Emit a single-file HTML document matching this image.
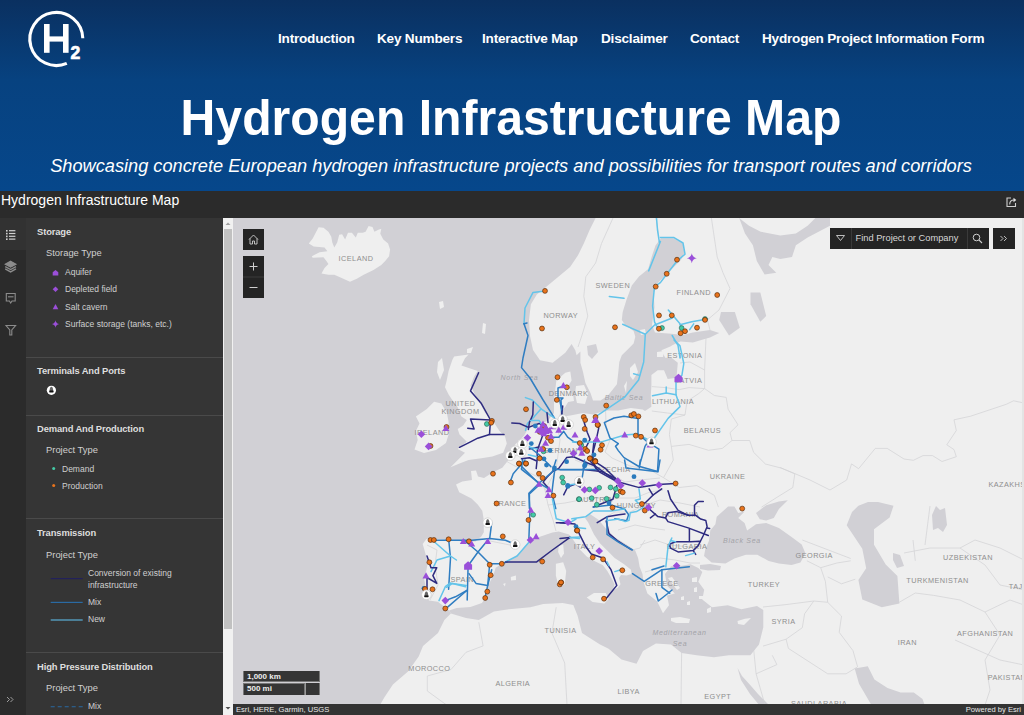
<!DOCTYPE html>
<html><head><meta charset="utf-8">
<style>
*{margin:0;padding:0;box-sizing:border-box}
html,body{width:1024px;height:715px;overflow:hidden;background:#2b2b2b;font-family:"Liberation Sans",sans-serif}
#hdr{position:absolute;left:0;top:0;width:1024px;height:191px;background:linear-gradient(180deg,#0a3060 0%,#074280 42%,#06478b 100%)}
.nav{position:absolute;top:30.5px;color:#fff;font-weight:bold;font-size:13.6px;white-space:nowrap;letter-spacing:-0.22px}
#title{position:absolute;left:0;top:89px;width:1024px;text-align:center;color:#fff;font-weight:bold;font-size:50px;white-space:nowrap;transform:translateX(-1px) scaleX(0.963)}
#sub{position:absolute;left:0;top:154.5px;width:1024px;text-align:center;color:#fff;font-style:italic;font-size:19px;white-space:nowrap;transform:translateX(-1px) scaleX(0.958)}
#bar{position:absolute;left:0;top:191px;width:1024px;height:27px;background:#2b2b2b}
#bartitle{position:absolute;left:1px;top:192px;color:#fff;font-size:14px;white-space:nowrap}
#strip{position:absolute;left:0;top:218px;width:26px;height:497px;background:#2b2b2b}
#strip .act{position:absolute;left:0;top:0;width:26px;height:32px;background:#323232}
#panel{position:absolute;left:26px;top:218px;width:197px;height:497px;background:#353535;overflow:hidden}
.lg{position:absolute;white-space:nowrap;color:#e6e6e6}
.h{font-weight:bold;font-size:9.4px;left:11px;letter-spacing:-0.12px;color:#dedede}
.pt{font-size:9.4px;left:20px;color:#d0d0d0}
.it{font-size:8.5px;color:#d0d0d0}
.div{position:absolute;left:0;width:197px;height:1px;background:#4a4a4a}
#scroll{position:absolute;left:223px;top:218px;width:10px;height:497px;background:#f1f1f1}
#thumb{position:absolute;left:1px;top:11px;width:8px;height:400px;background:#c1c1c1}
#map{position:absolute;left:233px;top:218px;width:791px;height:487px;overflow:hidden;background:#d3d3d7}
#attr{position:absolute;left:233px;top:704px;width:791px;height:11px;background:#333;color:#e8e8e8;font-size:7.6px;line-height:11px}
.btn{position:absolute;background:#242424}
</style></head><body>
<div id="hdr">
  <svg style="position:absolute;left:0;top:0" width="100" height="80">
    <path d="M 66.8 63.3 A 26.5 26.5 0 1 1 82.8 38.2" fill="none" stroke="#fff" stroke-width="3.1"/>
    <rect x="44" y="24" width="5.6" height="28.8" fill="#fff"/><rect x="63" y="24" width="5.6" height="28.8" fill="#fff"/><rect x="48" y="36.4" width="16" height="5.2" fill="#fff"/>
    <text x="70.6" y="58.8" fill="#fff" stroke="#fff" stroke-width="0.7" font-family="Liberation Sans" font-weight="bold" font-size="17.5">2</text>
  </svg>
  <div class="nav" style="left:278px">Introduction</div>
  <div class="nav" style="left:377px">Key Numbers</div>
  <div class="nav" style="left:482px">Interactive Map</div>
  <div class="nav" style="left:601px">Disclaimer</div>
  <div class="nav" style="left:690px">Contact</div>
  <div class="nav" style="left:762px">Hydrogen Project Information Form</div>
  <div id="title">Hydrogen Infrastructure Map</div>
  <div id="sub">Showcasing concrete European hydrogen infrastructure projects and possibilities for transport routes and corridors</div>
</div>
<div id="bar"></div>
<div id="bartitle">Hydrogen Infrastructure Map</div>
<svg width="16" height="16" style="position:absolute;left:1003px;top:194px"><path d="M8 4 H4 V12.5 H12.5 V9" fill="none" stroke="#cfcfcf" stroke-width="1.1"/><path d="M6.7 10.5 Q6.7 6 11 6" fill="none" stroke="#cfcfcf" stroke-width="1.1"/><path d="M10.5 3.8 L13.3 6 L10.5 8.2 Z" fill="#e0e0e0"/></svg>
<div id="strip"><div class="act"></div>
<svg width="26" height="497" style="position:absolute;left:0;top:0">
 <g fill="#d0d0d0"><rect x="6" y="12" width="1.6" height="1.6"/><rect x="6" y="14.8" width="1.6" height="1.6"/><rect x="6" y="17.6" width="1.6" height="1.6"/><rect x="6" y="20.4" width="1.6" height="1.6"/>
 <rect x="9" y="12.1" width="6.4" height="1.2"/><rect x="9" y="14.9" width="6.4" height="1.2"/><rect x="9" y="17.7" width="6.4" height="1.2"/><rect x="9" y="20.5" width="6.4" height="1.2"/></g>
 <g fill="none" stroke="#8c8c8c" stroke-width="1.1">
  <path d="M10.6 43.2 L16 46.2 L10.6 49.2 L5.2 46.2 Z" fill="#8c8c8c"/><path d="M5.2 48.6 L10.6 51.6 L16 48.6 M5.2 50.9 L10.6 53.9 L16 50.9" stroke-width="1.3"/>
  <path d="M6.3 75.5 H15.2 V83 H12 L10.7 85 L9.4 83 H6.3 Z"/><path d="M8 78.8 H13.5"/>
  <path d="M6 107.5 H15.6 L11.8 112 V117 H9.8 V112 Z"/>
  <path d="M7 479 L9.5 481.5 L7 484 M10.5 479 L13 481.5 L10.5 484" stroke="#aaa" stroke-width="0.9"/>
 </g>
</svg></div>
<div id="panel">
  <svg width="197" height="497" style="position:absolute;left:0;top:0">
 <g fill="#9b4fd9">
  <path d="M29.5 52 L32.3 54.2 V57.6 H26.7 V54.2 Z"/>
  <path d="M29.5 68.4 L32.3 71.2 L29.5 74 L26.7 71.2 Z"/>
  <path d="M29.5 86 L32.3 91.2 H26.7 Z"/>
  <path d="M29.5 102.2 Q30 105.5 33.3 106 Q30 106.5 29.5 109.8 Q29 106.5 25.7 106 Q29 105.5 29.5 102.2 Z"/>
 </g>
 <circle cx="25.4" cy="172.3" r="4.6" fill="#fff"/><path d="M23.6 173 Q23.6 169 25.4 168.8 Q27.2 169 27.2 173 Z" fill="#666"/><rect x="23.2" y="172.4" width="4.4" height="2" rx="0.6" fill="#111"/>
 <circle cx="27.7" cy="250.4" r="1.5" fill="#43c9a5"/>
 <circle cx="27.7" cy="267.5" r="1.5" fill="#e8731c"/>
 <rect x="24.7" y="360" width="32" height="1.2" fill="#22215a"/>
 <rect x="24.7" y="383.8" width="32" height="1.2" fill="#2a6aa3"/>
 <rect x="24.7" y="401.4" width="32" height="1.2" fill="#5aaed6"/>
 <path d="M24.7 488.8 H56.7" stroke="#2a6aa3" stroke-width="1.1" stroke-dasharray="4 3"/>
</svg>
<div class="lg h" style="top:8px">Storage</div>
  <div class="lg pt" style="top:29px">Storage Type</div>
  <div class="lg it" style="left:39px;top:49px">Aquifer</div>
  <div class="lg it" style="left:39px;top:66px">Depleted field</div>
  <div class="lg it" style="left:39px;top:84px">Salt cavern</div>
  <div class="lg it" style="left:39px;top:101px">Surface storage (tanks, etc.)</div>
  <div class="div" style="top:139px"></div>
  <div class="lg h" style="top:147px">Terminals And Ports</div>
  <div class="div" style="top:197px"></div>
  <div class="lg h" style="top:205px">Demand And Production</div>
  <div class="lg pt" style="top:226px">Project Type</div>
  <div class="lg it" style="left:36px;top:246px">Demand</div>
  <div class="lg it" style="left:36px;top:263px">Production</div>
  <div class="div" style="top:300px"></div>
  <div class="lg h" style="top:309px">Transmission</div>
  <div class="lg pt" style="top:331px">Project Type</div>
  <div class="lg it" style="left:62px;top:350px">Conversion of existing</div>
  <div class="lg it" style="left:62px;top:362px">infrastructure</div>
  <div class="lg it" style="left:62px;top:379px">Mix</div>
  <div class="lg it" style="left:62px;top:396px">New</div>
  <div class="div" style="top:434px"></div>
  <div class="lg h" style="top:443px">High Pressure Distribution</div>
  <div class="lg pt" style="top:464px">Project Type</div>
  <div class="lg it" style="left:62px;top:483px">Mix</div>
</div>
<div id="scroll"><div id="thumb"></div><svg width="10" height="497" style="position:absolute;left:0;top:0"><path d="M2.5 7 L5 4.5 L7.5 7 Z" fill="#a0a0a0"/><path d="M2.5 489 L5 491.5 L7.5 489 Z" fill="#505050"/></svg></div>
<div id="map"><svg width="791" height="487" viewBox="233 218 791 487" style="position:absolute;left:0;top:0;display:block">
<rect x="233" y="218" width="791" height="487" fill="#efefef"/>
<polygon points="233.0,218.0 595.6,218.0 589.7,229.8 583.8,243.5 578.0,255.2 570.1,267.0 558.4,276.8 546.6,286.6 536.8,294.4 530.9,304.2 529.0,319.9 530.0,336.0 533.0,350.0 540.0,360.2 552.7,362.7 565.3,352.7 571.6,343.9 575.3,350.2 576.6,355.2 580.4,351.4 580.4,362.7 582.9,371.6 585.4,382.9 590.5,393.0 593.0,400.5 600.5,400.5 608.0,395.5 616.9,384.2 618.5,370.4 619.3,362.0 621.8,355.3 627.7,349.4 633.6,343.5 635.3,336.8 633.6,331.0 625.2,325.0 621.8,320.0 622.7,312.0 626.4,300.0 631.8,285.5 639.0,276.4 648.2,269.1 651.8,256.4 655.5,245.5 660.9,238.2 673.6,238.2 682.7,243.6 684.5,252.7 680.9,260.0 671.8,269.1 662.7,278.2 657.3,283.6 653.6,292.7 654.5,307.3 652.0,325.0 655.0,332.5 671.5,333.8 682.8,335.0 692.9,332.5 710.0,330.0 719.2,333.0 710.0,337.6 705.5,338.8 692.9,342.6 680.3,341.4 672.8,345.0 670.3,346.4 661.4,350.2 665.2,357.7 671.5,357.7 677.8,362.7 676.5,377.8 667.7,379.0 664.0,370.3 657.7,370.3 651.4,375.0 651.4,385.4 650.8,395.4 651.4,406.8 645.0,411.0 642.7,409.5 630.8,408.0 618.2,410.6 605.6,410.6 593.0,414.4 583.0,413.0 570.3,415.6 559.0,417.0 560.2,413.1 565.3,406.8 569.0,400.5 571.6,393.0 567.8,386.7 571.6,380.4 570.3,371.6 565.3,372.8 556.4,380.4 555.2,390.5 554.0,400.5 554.0,413.1 547.4,421.0 538.6,424.0 528.3,428.3 524.0,435.7 515.2,444.5 509.5,453.0 508.5,460.0 502.3,467.7 493.0,472.3 484.0,478.0 478.0,476.5 476.0,470.5 471.0,471.0 472.0,480.0 462.3,481.5 456.0,484.6 459.2,492.3 471.5,498.5 477.7,504.6 482.3,510.8 483.8,520.0 483.8,532.3 481.0,537.0 478.0,538.4 475.6,541.4 463.0,541.4 450.4,540.1 435.3,538.9 426.4,538.9 422.7,543.9 425.2,552.7 427.7,562.8 426.4,570.3 423.9,577.9 425.2,584.2 426.4,593.0 429.0,600.6 437.8,601.8 442.8,605.6 449.1,610.6 450.9,613.6 444.4,620.0 438.0,633.0 423.0,645.9 418.7,656.6 408.0,671.6 392.9,684.5 384.3,697.4 380.0,705.0 233.0,705.0" fill="#d1d0d5"/>
<polygon points="449.1,610.6 456.7,608.1 470.5,606.9 481.9,603.1 486.9,595.5 488.2,585.5 493.2,575.4 495.7,567.8 503.3,562.8 513.4,557.7 519.6,552.7 525.0,546.2 530.8,540.3 540.6,536.4 552.4,532.5 558.8,531.4 569.1,534.4 573.5,540.2 579.4,549.0 586.7,556.4 594.0,560.8 602.9,565.2 607.3,571.1 611.7,578.4 614.6,584.3 613.0,590.0 617.5,588.0 620.5,584.3 619.0,578.0 621.0,575.0 626.4,575.5 631.5,574.0 630.8,569.6 623.4,563.7 614.6,557.9 608.7,552.0 599.9,543.2 594.0,534.4 588.2,522.6 585.2,518.2 589.6,513.8 598.5,519.7 605.8,528.5 614.6,537.3 626.4,544.6 635.2,550.5 638.1,557.9 639.6,566.7 642.5,574.0 643.5,581.8 647.4,593.6 657.2,601.4 663.0,613.2 669.0,605.3 667.0,595.5 674.8,593.6 667.0,585.8 665.0,574.0 671.0,566.2 678.8,566.2 690.5,564.2 698.3,568.1 702.3,572.0 698.3,581.8 704.2,589.7 702.3,599.5 712.0,607.3 727.7,605.3 741.4,609.3 757.0,606.0 763.3,610.0 763.3,627.3 759.0,644.4 750.4,655.2 728.9,655.2 713.9,657.3 696.7,655.2 681.6,653.0 671.0,644.4 655.9,643.4 643.0,650.9 636.5,663.8 621.5,659.5 608.6,648.7 600.0,644.4 582.0,633.0 577.6,615.8 573.3,605.0 562.6,602.9 543.3,604.0 530.4,607.2 508.9,609.3 493.9,611.5 478.8,620.0 466.0,618.0 450.9,613.6" fill="#d1d0d5"/>
<polygon points="716.7,516.7 728.1,506.5 734.4,506.5 738.2,512.9 744.6,511.6 738.2,517.9 744.6,523.0 747.1,530.6 756.0,524.3 766.2,523.0 778.9,528.1 791.6,537.0 801.7,544.6 805.5,553.5 800.4,562.4 791.6,564.9 778.9,563.6 768.7,561.1 757.3,554.7 745.9,554.7 734.4,558.6 725.5,563.6 711.6,562.4 704.0,556.0 705.2,549.7 709.0,540.8 710.3,530.6 715.4,524.3" fill="#d1d0d5"/>
<polygon points="756.0,512.9 766.2,505.2 778.9,501.4 787.8,500.2 778.9,509.0 773.8,517.9 766.2,520.5 759.8,519.2" fill="#d1d0d5"/>
<polygon points="700.0,565.0 710.0,564.0 721.0,566.0 720.0,570.0 708.0,570.5 700.0,569.0" fill="#d1d0d5"/>
<polygon points="846.7,525.3 852.0,512.0 858.4,505.8 868.0,502.0 878.0,501.9 893.5,505.8 889.6,517.5 874.0,529.2 874.0,544.8 885.7,564.4 897.4,576.0 899.4,603.4 881.8,607.3 862.3,599.5 858.4,580.0 866.2,568.3 862.3,548.8 854.5,537.0" fill="#d1d0d5"/>
<polygon points="893.0,553.0 900.0,555.0 904.0,566.0 897.0,568.0 893.0,560.0" fill="#d1d0d5"/>
<polygon points="932.0,515.0 936.0,506.0 940.0,510.0 945.0,508.0 947.0,525.0 943.0,532.0 938.0,528.0 933.0,530.0" fill="#d1d0d5"/>
<polygon points="854.7,668.4 867.8,666.3 874.4,679.4 887.5,688.0 900.6,692.5 913.8,692.5 922.5,699.0 925.0,706.0 872.0,706.0 859.0,683.8" fill="#d1d0d5"/>
<polygon points="737.5,668.0 742.0,676.0 750.4,685.3 758.0,694.0 764.0,700.0 770.0,706.0 760.0,706.0 750.0,694.0 741.0,680.0" fill="#d1d0d5"/>
<polygon points="739.2,218.0 749.0,225.8 760.7,231.7 780.3,235.6 795.9,233.6 807.6,225.8 815.4,218.0 830.0,218.0 830.0,225.8 807.6,237.5 795.9,245.3 792.0,257.0 780.3,259.0 772.4,257.0 768.5,264.9 776.3,272.7 764.6,274.6 756.8,261.0 752.9,245.3 745.0,233.6" fill="#d1d0d5"/>
<polygon points="721.0,312.0 734.9,312.0 739.8,327.7 729.0,335.5 719.2,319.9" fill="#d1d0d5"/>
<polygon points="750.5,292.4 760.3,292.4 766.2,316.0 760.3,321.8 750.5,304.2" fill="#d1d0d5"/>
<polygon points="587.0,346.0 596.0,344.0 598.0,352.0 592.0,359.0 588.0,355.0" fill="#d1d0d5"/>
<polygon points="668.0,578.0 672.0,577.0 680.0,588.0 677.0,590.0" fill="#efefef"/>
<polygon points="692.0,578.0 697.0,577.0 697.0,582.0 692.0,582.0" fill="#efefef"/>
<polygon points="694.0,588.0 697.0,587.0 697.0,592.0 694.0,592.0" fill="#efefef"/>
<polygon points="681.0,597.0 684.0,596.0 684.0,600.0 681.0,600.0" fill="#efefef"/>
<polygon points="687.0,602.0 690.0,601.0 690.0,605.0 687.0,605.0" fill="#efefef"/>
<polygon points="707.0,609.0 711.0,607.0 711.0,612.0 707.0,613.0" fill="#efefef"/>
<polygon points="699.0,596.0 703.0,596.0 703.0,599.0 699.0,599.0" fill="#efefef"/>
<polygon points="308.8,243.5 312.7,238.6 315.7,232.7 318.6,227.3 323.5,227.8 328.4,231.8 331.3,236.7 332.3,242.5 334.3,247.4 337.2,242.5 339.2,234.7 342.1,234.2 345.1,239.6 348.0,232.7 351.9,232.7 355.8,237.6 357.8,232.7 362.7,232.7 365.6,231.8 368.6,225.9 372.5,226.9 374.4,231.8 378.4,229.8 381.3,228.8 380.3,233.7 383.3,239.6 388.1,243.5 390.1,249.4 389.1,256.2 385.2,261.1 381.3,265.1 373.5,270.0 363.7,274.8 356.8,278.8 350.0,281.7 341.1,277.8 334.3,274.8 328.4,274.8 321.5,273.4 324.5,268.0 328.4,264.1 326.4,261.1 323.5,257.2 312.7,257.7 311.8,256.2 319.6,252.3 327.4,251.3 324.5,247.4 313.7,246.4" fill="#efefef"/>
<polygon points="454.1,356.4 468.6,354.5 465.0,358.2 461.4,365.5 477.7,370.9 474.1,376.4 470.5,385.5 475.9,396.4 481.4,405.5 485.0,412.7 492.3,420.0 495.9,425.5 499.5,430.9 505.0,436.4 506.8,443.6 503.2,452.7 492.3,456.4 481.4,458.2 468.6,460.0 459.5,463.6 450.5,467.3 459.5,458.2 465.0,452.7 457.7,449.1 466.8,441.8 459.5,434.5 457.7,429.1 463.2,425.5 466.8,420.0 461.4,416.4 457.7,407.3 452.3,400.0 448.6,394.5 445.0,387.3 446.8,380.0 448.6,370.9 452.3,360.0" fill="#efefef"/>
<polygon points="415.9,416.4 426.8,409.1 434.1,401.8 441.4,403.6 446.8,412.7 448.6,421.8 448.6,434.5 446.0,443.0 436.0,450.0 424.0,453.0 414.5,449.5 417.7,440.0 415.9,430.9 419.5,423.6" fill="#efefef"/>
<polygon points="438.0,362.0 442.0,358.0 444.0,370.0 440.0,380.0 437.0,372.0" fill="#efefef"/>
<polygon points="483.0,323.0 486.0,324.0 485.0,334.0 482.0,333.0" fill="#efefef"/>
<polygon points="467.0,349.0 473.0,347.0 471.0,353.0 467.0,353.0" fill="#efefef"/>
<polygon points="439.0,302.0 443.0,301.0 444.0,307.0 440.0,309.0" fill="#efefef"/>
<polygon points="558.8,546.1 563.2,544.6 564.0,553.5 561.0,557.9 558.1,552.0" fill="#efefef"/>
<polygon points="555.9,563.7 563.2,562.3 566.2,571.1 564.7,584.3 558.8,587.2 555.9,575.5" fill="#efefef"/>
<polygon points="586.7,597.5 594.0,593.1 605.8,593.1 608.7,599.0 604.3,603.4 592.6,601.9" fill="#efefef"/>
<polygon points="671.0,618.0 680.0,617.0 690.0,619.0 689.0,623.0 676.0,623.0 671.0,621.0" fill="#efefef"/>
<polygon points="737.5,621.0 745.0,618.7 751.0,618.0 744.0,625.0 738.0,624.0" fill="#efefef"/>
<polygon points="510.8,577.0 515.9,575.4 516.0,580.0 511.0,580.4" fill="#efefef"/>
<polygon points="503.0,584.0 505.5,583.0 505.0,586.5" fill="#efefef"/>
<polygon points="630.0,368.0 635.0,363.0 638.0,372.0 633.0,380.0 630.0,376.0" fill="#efefef"/>
<polygon points="624.0,386.0 627.0,381.0 626.0,393.0" fill="#efefef"/>
<polygon points="576.0,386.0 584.0,385.0 588.0,394.0 585.0,404.0 577.0,403.0 575.0,394.0" fill="#efefef"/>
<polygon points="567.0,395.0 573.0,394.0 574.0,401.0 568.0,402.0" fill="#efefef"/>
<polygon points="657.0,352.0 664.0,351.0 663.0,357.0 657.0,357.0" fill="#efefef"/>
<polygon points="640.0,330.0 645.0,329.0 646.0,334.0 641.0,335.0" fill="#efefef"/>
<g fill="none" stroke="#d3d3d5" stroke-width="0.75">
<polyline points="613.0,218.0 601.5,243.5 595.6,263.0 585.8,276.8 583.8,296.4 587.8,316.0 581.9,335.5 578.0,347.0"/>
<polyline points="656.0,218.0 659.0,238.0"/>
<polyline points="711.4,218.0 717.2,257.0 723.0,272.8 730.0,288.5 719.0,310.0 707.4,319.9 710.0,330.0"/>
<polyline points="780.0,467.5 794.3,473.4 810.0,480.0 830.0,490.0 846.7,480.0 851.5,463.9 858.6,468.7 875.3,448.4 887.2,448.4 904.0,459.0 913.4,460.3 923.0,455.6 932.5,455.6 942.0,461.5 956.3,456.7 954.0,449.6 946.8,444.8 956.3,430.5 954.0,419.8 970.6,416.2 1006.3,404.3 1013.5,400.8 1024.0,403.0"/>
<polyline points="478.8,622.2 483.1,645.9 466.0,652.3 451.0,669.5 427.3,676.0 427.3,691.0 446.6,705.0"/>
<polyline points="556.2,607.2 551.9,633.0 564.7,663.0 567.0,705.0"/>
<polyline points="681.6,653.0 681.0,705.0"/>
<polyline points="753.8,650.7 756.1,673.8 765.0,705.0"/>
<polyline points="763.0,607.0 786.0,604.6 813.8,601.0 827.7,602.3 825.4,581.5 820.7,567.7 836.9,563.0 850.7,560.8"/>
<polyline points="802.3,540.0 832.3,551.5 850.7,558.5"/>
<polyline points="806.9,560.8 820.7,567.7"/>
<polyline points="827.7,576.9 841.5,583.8 855.3,579.2"/>
<polyline points="827.7,602.3 841.5,616.1 839.2,632.3 853.0,650.7 857.6,666.9"/>
<polyline points="813.8,601.0 804.6,613.8 802.3,627.7 786.1,639.2 763.0,646.1"/>
<polyline points="786.1,639.2 788.4,648.4 827.7,673.8 846.1,673.8 857.6,666.9"/>
<polyline points="772.3,655.3 776.9,664.6 756.1,673.8"/>
<polyline points="899.2,602.3 915.3,593.0 933.8,595.4 960.0,600.0 985.0,612.0 1000.0,635.0 985.0,660.0 990.0,690.0 985.0,705.0"/>
<polyline points="913.0,540.0 915.3,560.8"/>
<polyline points="904.0,553.0 930.0,548.0 960.0,548.0 985.0,565.0 1000.0,585.0 1024.0,590.0"/>
<polyline points="930.0,506.0 925.0,545.0"/>
<polyline points="960.0,548.0 975.0,540.0 1000.0,548.0 1024.0,560.0"/>
<polyline points="985.0,612.0 1010.0,600.0 1024.0,605.0"/>
<polyline points="955.0,640.0 1000.0,660.0 1024.0,665.0"/>
<polyline points="704.6,388.6 714.4,395.5 726.2,397.4 728.1,409.2 738.0,424.8 730.0,432.7 732.0,440.5 722.3,448.4 708.6,450.3 689.0,444.4 671.3,446.4 669.4,434.6 671.3,419.0 685.0,415.0 687.0,401.3 698.8,393.5 704.6,388.6"/>
<polyline points="732.0,440.5 749.7,440.5 753.6,452.3 765.4,464.0 781.0,468.0 794.8,473.8 792.8,487.5 777.0,497.3 761.5,507.1"/>
<polyline points="671.3,446.4 673.3,460.1 663.5,477.7 679.2,487.5 696.8,485.6 714.4,495.4 718.4,507.1"/>
<polyline points="651.8,386.6 665.5,387.6 679.2,389.6 689.0,387.6 704.6,388.6"/>
<polyline points="651.8,411.0 667.4,413.0 685.0,415.0"/>
<polyline points="680.0,363.0 690.0,362.0 704.6,370.0 704.6,388.6"/>
<polyline points="706.0,338.0 704.6,370.0"/>
<polyline points="605.6,410.6 606.0,425.0 610.0,440.0 605.0,452.0 612.0,458.0 630.0,466.0 650.0,470.0 663.5,477.7"/>
<polyline points="504.0,460.0 515.0,466.0 528.0,472.0 540.0,478.0 545.0,490.0 548.0,505.0 553.0,520.0 556.0,531.0"/>
<polyline points="548.0,505.0 565.0,503.0 580.0,500.0 590.0,497.0"/>
<polyline points="545.0,490.0 556.0,470.0 558.0,455.0 560.0,440.0 556.0,420.0"/>
<polyline points="575.0,460.0 590.0,466.0 605.0,470.0 615.0,476.0 625.0,482.0 640.0,480.0 660.0,478.0"/>
<polyline points="590.0,497.0 605.0,500.0 620.0,498.0 635.0,498.0 650.0,492.0 663.0,490.0"/>
<polyline points="478.0,538.4 490.0,541.0 505.0,544.0 515.0,546.0"/>
<polyline points="427.0,545.0 437.0,550.0 435.0,565.0 438.0,585.0 430.0,600.0"/>
<polyline points="600.0,520.0 615.0,512.0 630.0,512.0 645.0,505.0 660.0,500.0 680.0,503.0 700.0,507.0"/>
<polyline points="618.0,530.0 635.0,525.0 650.0,528.0 665.0,530.0"/>
<polyline points="640.0,545.0 655.0,540.0 670.0,545.0 690.0,547.0 702.0,546.0"/>
<polyline points="650.0,560.0 660.0,558.0 675.0,560.0 690.0,563.0 700.0,563.0"/>
<polyline points="632.0,550.0 640.0,548.0 645.0,540.0"/>
<polyline points="645.0,572.0 660.0,568.0"/>
</g>
<g font-family="Liberation Sans" font-size="7.3" fill="#8e8e8e" text-anchor="middle" letter-spacing="0.45">
<text x="356" y="260.9">ICELAND</text>
<text x="560.7" y="317.7">NORWAY</text>
<text x="612.8" y="287.9">SWEDEN</text>
<text x="693.7" y="295.09999999999997">FINLAND</text>
<text x="684.8" y="358.0">ESTONIA</text>
<text x="688.7" y="382.5">LATVIA</text>
<text x="673" y="403.7">LITHUANIA</text>
<text x="702.4" y="432.7">BELARUS</text>
<text x="727.5" y="479.2">UKRAINE</text>
<text x="568.5" y="395.7">DENMARK</text>
<text x="460.5" y="406.0">UNITED</text>
<text x="460.5" y="413.7">KINGDOM</text>
<text x="432" y="435.4">IRELAND</text>
<text x="510" y="506.2">FRANCE</text>
<text x="462.3" y="581.9000000000001">SPAIN</text>
<text x="584.5" y="548.9000000000001">ITALY</text>
<text x="563" y="453.0">GERMANY</text>
<text x="613" y="471.7">CZECHIA</text>
<text x="595.3" y="501.5">AUSTRIA</text>
<text x="636.4" y="508.09999999999997">HUNGARY</text>
<text x="680.5" y="516.6">ROMANIA</text>
<text x="687" y="548.9000000000001">BULGARIA</text>
<text x="661.9" y="585.7">GREECE</text>
<text x="764" y="586.7">TURKEY</text>
<text x="814.2" y="557.5">GEORGIA</text>
<text x="968" y="560.1">UZBEKISTAN</text>
<text x="937.5" y="582.8000000000001">TURKMENISTAN</text>
<text x="1017" y="589.4000000000001">TAJI</text>
<text x="1007" y="487.2">KAZAKHS</text>
<text x="783.5" y="624.4000000000001">SYRIA</text>
<text x="907.3" y="645.3000000000001">IRAN</text>
<text x="985.2" y="635.7">AFGHANISTAN</text>
<text x="1007" y="680.1">PAKISTAN</text>
<text x="819" y="706.1">SAUDI ARABIA</text>
<text x="628.6" y="694.0">LIBYA</text>
<text x="717.7" y="699.3000000000001">EGYPT</text>
<text x="560.5" y="632.9000000000001">TUNISIA</text>
<text x="512.8" y="685.5">ALGERIA</text>
<text x="429.4" y="670.5">MOROCCO</text>
</g>
<g font-family="Liberation Sans" font-size="7" font-style="italic" fill="#a3a3a8" text-anchor="middle" letter-spacing="0.7">
<text x="519.5" y="380.2">North Sea</text>
<text x="624" y="400.4">Baltic Sea</text>
<text x="742" y="543.1">Black Sea</text>
<text x="679.5" y="635.0">Mediterranean</text>
<text x="680" y="646.4">Sea</text>
</g>
<g fill="none" stroke-width="1.5" stroke-linejoin="round" stroke-linecap="round">
<polyline stroke="#63c4ea" points="545.0,290.9 533.0,292.4 525.0,308.0 524.0,323.8"/>
<polyline stroke="#2f7dc1" points="524.0,323.8 528.0,335.5 523.0,358.0 521.5,367.6 530.0,378.0 543.1,400.0 554.8,418.6"/>
<polyline stroke="#2f7dc1" points="524.0,323.8 527.0,323.0"/>
<polyline stroke="#63c4ea" points="525.4,397.6 532.3,400.0 541.1,408.8 553.9,417.6"/>
<polyline stroke="#63c4ea" points="541.1,408.8 534.3,416.6 527.4,423.5 525.5,430.4"/>
<polyline stroke="#2e2b80" points="533.3,402.0 532.8,414.7 529.4,422.5 528.4,429.4"/>
<polyline stroke="#2e2b80" points="547.0,412.7 548.0,422.5"/>
<polyline stroke="#2e2b80" points="511.8,423.0 519.6,423.5 528.4,427.4 539.2,423.5 546.0,426.0"/>
<polyline stroke="#63c4ea" points="530.4,420.6 539.2,420.6 541.0,423.5"/>
<polyline stroke="#2e2b80" points="478.6,372.7 470.5,390.9 481.4,403.6 490.5,420.0 489.5,434.5 504.0,434.5"/>
<polyline stroke="#2e2b80" points="489.5,434.5 477.7,438.2 470.5,441.8 459.5,447.3"/>
<polyline stroke="#2e2b80" points="490.5,420.0 470.5,419.1 474.1,429.1 467.7,428.2"/>
<polyline stroke="#2f7dc1" points="561.0,387.0 558.0,388.0 558.0,398.0 563.0,398.0 561.0,400.0 561.5,412.0 562.7,418.0"/>
<polyline stroke="#63c4ea" points="609.3,296.4 624.0,298.3"/>
<polyline stroke="#63c4ea" points="622.7,324.2 631.9,328.4 645.3,334.3 643.7,362.0 638.6,380.0 625.0,396.8 597.6,415.4"/>
<polyline stroke="#63c4ea" points="645.3,334.3 654.6,325.0 672.2,318.0"/>
<polyline stroke="#63c4ea" points="633.6,373.7 639.5,375.4"/>
<polyline stroke="#63c4ea" points="656.5,218.0 657.5,229.8 659.4,242.5"/>
<polyline stroke="#63c4ea" points="660.4,237.6 674.0,237.6 683.0,243.0 685.0,254.2 677.0,261.0 666.3,274.8 660.4,282.6 654.5,286.6 652.6,306.0 654.5,321.8 658.5,329.7"/>
<polyline stroke="#63c4ea" points="660.4,241.5 648.7,270.9"/>
<polyline stroke="#63c4ea" points="668.3,310.0 680.0,323.8 682.0,330.0"/>
<polyline stroke="#63c4ea" points="672.2,335.5 678.0,345.3 680.0,358.0"/>
<polyline stroke="#63c4ea" points="680.0,324.8 691.8,321.8 707.4,318.9"/>
<polyline stroke="#63c4ea" points="693.7,323.8 689.7,329.7"/>
<polyline stroke="#63c4ea" points="674.0,340.0 680.0,345.9 683.8,363.5 681.9,375.3 676.0,381.0 676.0,394.8 680.0,406.6 668.1,418.4 654.4,438.0"/>
<polyline stroke="#63c4ea" points="652.5,395.8 666.2,392.9 676.0,394.8"/>
<polyline stroke="#63c4ea" points="666.2,387.0 666.2,392.9"/>
<polyline stroke="#63c4ea" points="601.5,441.9 625.0,435.0 636.8,434.0 648.6,440.0"/>
<polyline stroke="#2f7dc1" points="604.3,422.6 614.0,418.0 624.0,416.3 638.0,418.4 638.0,433.8 647.7,442.2 658.9,449.2 657.5,471.5 638.0,466.0 624.0,457.6 618.3,450.6 615.5,446.4 618.3,443.6 610.0,438.0 604.3,422.6"/>
<polyline stroke="#2f7dc1" points="639.3,466.0 645.0,446.4 647.7,442.2"/>
<polyline stroke="#2e2b80" points="543.1,434.3 539.2,445.0 537.2,451.0 537.2,458.8 536.2,468.6"/>
<polyline stroke="#2e2b80" points="529.4,449.0 539.0,447.0"/>
<polyline stroke="#2e2b80" points="562.7,405.9 561.7,415.0"/>
<polyline stroke="#2e2b80" points="584.2,422.5 587.2,432.3 590.1,439.2 586.2,447.0 584.0,451.0"/>
<polyline stroke="#2e2b80" points="594.0,441.1 592.0,458.8 596.0,468.6"/>
<polyline stroke="#2e2b80" points="549.0,489.0 543.1,482.1 547.0,477.2 552.9,471.3 558.8,468.4 566.6,457.6 573.5,456.7 586.2,462.5 583.3,469.4 601.5,471.5 615.5,478.5"/>
<polyline stroke="#2f7dc1" points="554.8,469.4 552.9,484.1 551.9,492.9 555.8,508.6"/>
<polyline stroke="#2e2b80" points="563.7,494.8 567.6,487.0 575.4,484.1 580.3,487.0"/>
<polyline stroke="#63c4ea" points="568.6,485.0 575.4,484.1"/>
<polyline stroke="#2f7dc1" points="584.2,464.5 582.3,477.2"/>
<polyline stroke="#2f7dc1" points="522.5,459.6 521.5,469.4 539.2,483.1 549.0,489.0"/>
<polyline stroke="#2f7dc1" points="529.4,508.6 529.4,493.9 539.2,485.0"/>
<polyline stroke="#2f7dc1" points="554.8,469.4 600.0,469.4"/>
<polyline stroke="#2e2b80" points="521.5,458.8 529.4,457.8 536.2,460.7"/>
<polyline stroke="#2e2b80" points="586.0,420.0 584.0,417.0"/>
<polyline stroke="#2e2b80" points="596.0,418.4 598.7,428.2 596.0,440.8 593.1,452.0 593.1,460.4 605.7,468.7 615.5,478.5 621.1,485.5"/>
<polyline stroke="#2f7dc1" points="551.0,437.2 558.8,437.2 563.7,431.3 567.6,437.2 574.4,442.1 580.0,443.0"/>
<polyline stroke="#2f7dc1" points="529.4,447.0 539.2,454.8 543.1,458.8 550.9,466.6"/>
<polyline stroke="#2f7dc1" points="559.7,400.0 561.7,409.8"/>
<polyline stroke="#63c4ea" points="572.5,442.1 585.2,442.1 601.5,441.9"/>
<polyline stroke="#63c4ea" points="529.4,447.0 537.0,449.0"/>
<polyline stroke="#63c4ea" points="528.4,454.8 537.0,456.8"/>
<polyline stroke="#2f7dc1" points="434.8,540.3 472.0,540.3 489.7,538.4 505.4,540.3 515.2,544.2"/>
<polyline stroke="#2f7dc1" points="489.7,538.4 491.7,522.7"/>
<polyline stroke="#2f7dc1" points="464.2,540.3 478.0,552.0 489.7,563.8 501.4,563.8 507.3,561.9"/>
<polyline stroke="#2f7dc1" points="487.7,540.3 478.0,552.0 468.1,565.8 467.2,600.0"/>
<polyline stroke="#2f7dc1" points="448.6,538.4 450.5,558.0 448.6,589.3"/>
<polyline stroke="#2f7dc1" points="528.9,538.4 529.9,511.0 528.9,493.3 538.7,483.5 552.4,471.8 556.0,460.0"/>
<polyline stroke="#2f7dc1" points="525.0,460.0 513.2,473.7 510.3,481.5"/>
<polyline stroke="#2f7dc1" points="521.0,465.9 538.7,483.5"/>
<polyline stroke="#2f7dc1" points="469.0,573.6 476.0,583.4 487.7,585.4 491.7,569.7"/>
<polyline stroke="#2f7dc1" points="489.7,563.8 487.7,585.4 485.0,598.0"/>
<polyline stroke="#63c4ea" points="434.8,542.3 450.5,556.0 456.4,560.0"/>
<polyline stroke="#63c4ea" points="431.0,571.7 437.0,560.0 450.5,556.0"/>
<polyline stroke="#63c4ea" points="446.6,587.3 452.5,583.4 466.2,585.4"/>
<polyline stroke="#63c4ea" points="505.4,561.9 517.1,556.0 528.9,542.3"/>
<polyline stroke="#63c4ea" points="552.4,499.2 556.3,518.8 570.0,522.7 576.0,519.0"/>
<polyline stroke="#63c4ea" points="570.0,537.4 580.0,537.0"/>
<polyline stroke="#2e2b80" points="505.4,561.9 536.7,561.9 552.4,550.0 570.0,537.4"/>
<polyline stroke="#2e2b80" points="427.0,556.0 431.0,567.7 436.8,567.7 432.9,575.6 436.8,583.4 427.0,577.5 427.0,589.3"/>
<polyline stroke="#2e2b80" points="556.3,522.7 568.0,522.7"/>
<polyline stroke="#2f7dc1" points="466.8,590.5 455.4,596.8 445.3,600.6"/>
<polyline stroke="#2f7dc1" points="466.8,590.5 447.9,606.9"/>
<polyline stroke="#63c4ea" points="439.0,600.6 445.3,586.7 450.4,582.9 465.5,586.7"/>
<polyline stroke="#2e2b80" points="586.2,462.5 595.3,466.0 616.8,481.5 638.4,487.4 658.0,484.5 675.6,483.5"/>
<polyline stroke="#2e2b80" points="589.4,460.0 599.2,471.8 616.8,481.5"/>
<polyline stroke="#2e2b80" points="616.8,485.5 612.9,499.2 593.3,507.0"/>
<polyline stroke="#2e2b80" points="560.0,522.7 575.0,524.0 579.6,534.4 585.5,546.2 591.3,554.0 603.0,558.0 611.0,569.7 616.8,585.4 605.0,600.0"/>
<polyline stroke="#2e2b80" points="560.0,538.4 569.8,537.4"/>
<polyline stroke="#2e2b80" points="597.2,522.7 607.0,516.8 618.8,514.8 625.0,514.0"/>
<polyline stroke="#2e2b80" points="606.2,521.0 609.0,533.6 617.3,540.6 631.3,549.7"/>
<polyline stroke="#2f7dc1" points="560.0,469.8 583.5,469.8 584.5,460.0"/>
<polyline stroke="#2f7dc1" points="624.6,460.0 626.0,468.0 658.0,471.8 660.0,460.0"/>
<polyline stroke="#2f7dc1" points="640.3,460.0 639.3,468.0"/>
<polyline stroke="#2f7dc1" points="593.3,507.0 611.0,505.0 624.6,509.0 628.6,514.8 626.6,520.7 614.8,518.8"/>
<polyline stroke="#2f7dc1" points="607.0,516.8 607.0,534.4 618.8,542.3 632.5,550.0"/>
<polyline stroke="#2f7dc1" points="632.5,573.6 644.2,581.4 661.9,569.7 689.3,566.8"/>
<polyline stroke="#2f7dc1" points="661.9,569.7 661.9,587.3 669.7,593.2"/>
<polyline stroke="#2f7dc1" points="652.0,569.7 664.0,566.0"/>
<polyline stroke="#2f7dc1" points="656.0,593.5 658.3,601.0 667.8,593.5 672.0,590.0"/>
<polyline stroke="#63c4ea" points="571.8,518.8 585.5,516.8 593.3,511.0 611.0,511.0 624.6,509.0"/>
<polyline stroke="#63c4ea" points="575.7,527.6 585.5,528.6"/>
<polyline stroke="#63c4ea" points="569.8,537.4 579.6,538.4"/>
<polyline stroke="#63c4ea" points="614.8,571.6 620.8,569.7"/>
<polyline stroke="#63c4ea" points="607.0,561.9 609.0,565.8"/>
<polyline stroke="#2e2b80" points="649.1,488.9 652.9,495.2 661.7,488.9"/>
<polyline stroke="#2e2b80" points="652.9,495.2 645.3,502.7 641.6,504.0"/>
<polyline stroke="#2e2b80" points="668.0,490.8 670.5,499.0 678.1,510.3 688.2,515.3 695.7,515.3 700.8,519.1 705.8,520.4 707.1,526.7 703.3,535.5 698.2,545.6 693.2,550.6 678.1,551.9 670.5,548.1 669.3,544.3 675.6,541.8 690.7,541.8 699.5,541.2"/>
<polyline stroke="#2e2b80" points="647.9,507.8 657.9,516.6 665.5,517.9 668.0,512.8 676.8,511.6 688.2,515.3"/>
<polyline stroke="#2e2b80" points="665.5,517.9 668.0,521.6 688.2,527.9 708.3,535.5"/>
<polyline stroke="#2e2b80" points="694.5,515.3 694.5,505.3 698.2,501.5 703.3,501.5"/>
<polyline stroke="#2e2b80" points="689.4,529.2 689.4,540.5"/>
<polyline stroke="#2e2b80" points="650.4,517.9 655.4,514.0"/>
<polyline stroke="#2e2b80" points="707.0,528.0 709.6,528.6"/>
<polyline stroke="#2e2b80" points="693.2,550.6 695.7,554.4"/>
<polyline stroke="#63c4ea" points="639.0,488.9 640.3,499.0 635.3,500.2 637.8,502.7 642.8,504.0 642.8,507.8 636.5,511.6 630.2,512.8 629.0,520.4 625.2,521.6 618.9,519.1 607.6,520.4"/>
<polyline stroke="#63c4ea" points="671.8,538.0 668.0,546.8 666.8,558.2 665.8,566.8"/>
<polyline stroke="#63c4ea" points="670.5,540.5 675.6,541.8"/>
<polyline stroke="#63c4ea" points="685.6,555.6 694.5,553.1"/>
</g>
<g fill="#2a7bbd">
<circle cx="535.3" cy="426" r="2.4"/>
<circle cx="531.3" cy="443.6" r="2.4"/>
<circle cx="550" cy="450.4" r="2.4"/>
<circle cx="544" cy="458.8" r="2.4"/>
<circle cx="546.5" cy="465.1" r="2.4"/>
<circle cx="554.4" cy="468" r="2.4"/>
<circle cx="566.6" cy="461.7" r="2.4"/>
<circle cx="584.7" cy="440.2" r="2.4"/>
<circle cx="594" cy="454.8" r="2.4"/>
<circle cx="585.2" cy="464.6" r="2.4"/>
<circle cx="567.7" cy="485.5" r="2.4"/>
<circle cx="576" cy="526.6" r="2.4"/>
<circle cx="424" cy="588.3" r="2.4"/>
<circle cx="634" cy="476.7" r="2.4"/>
<circle cx="567.8" cy="486.4" r="2.4"/>
<circle cx="609" cy="503" r="2.4"/>
<circle cx="584.5" cy="465.9" r="2.4"/>
</g>
<g fill="#43c9a5" stroke="#245e50" stroke-width="0.6">
<circle cx="486.8" cy="424" r="2.4"/>
<circle cx="662" cy="328" r="2.4"/>
<circle cx="681.6" cy="328" r="2.4"/>
<circle cx="705" cy="319" r="2.4"/>
<circle cx="533.2" cy="514.8" r="2.4"/>
<circle cx="562.2" cy="477.6" r="2.4"/>
<circle cx="563.2" cy="482.5" r="2.4"/>
<circle cx="578.8" cy="499.2" r="2.4"/>
<circle cx="543.6" cy="451.4" r="2.4"/>
<circle cx="581.3" cy="445" r="2.4"/>
<circle cx="589.4" cy="489.4" r="2.4"/>
<circle cx="599.2" cy="487.8" r="2.4"/>
<circle cx="610.5" cy="487.4" r="2.4"/>
<circle cx="615.8" cy="489" r="2.4"/>
<circle cx="616.8" cy="495.8" r="2.4"/>
<circle cx="579.2" cy="499.2" r="2.4"/>
<circle cx="591.7" cy="498.2" r="2.4"/>
<circle cx="606.6" cy="498.8" r="2.4"/>
<circle cx="596.8" cy="504.7" r="2.4"/>
</g>
<g fill="#e8731c" stroke="#5a2e0c" stroke-width="0.7">
<circle cx="545" cy="290.9" r="2.45"/>
<circle cx="542" cy="328.5" r="2.45"/>
<circle cx="615" cy="327.3" r="2.45"/>
<circle cx="677" cy="259.7" r="2.45"/>
<circle cx="666.7" cy="273.8" r="2.45"/>
<circle cx="655.7" cy="286.6" r="2.45"/>
<circle cx="717.2" cy="295" r="2.45"/>
<circle cx="659" cy="315.4" r="2.45"/>
<circle cx="671.8" cy="315.4" r="2.45"/>
<circle cx="705" cy="319.9" r="2.45"/>
<circle cx="697" cy="327.7" r="2.45"/>
<circle cx="658.9" cy="328.7" r="2.45"/>
<circle cx="685" cy="331.2" r="2.45"/>
<circle cx="680.6" cy="333.2" r="2.45"/>
<circle cx="557.5" cy="377.2" r="2.45"/>
<circle cx="566.8" cy="387.3" r="2.45"/>
<circle cx="556.8" cy="399.9" r="2.45"/>
<circle cx="606.2" cy="405.6" r="2.45"/>
<circle cx="491.9" cy="420.9" r="2.45"/>
<circle cx="491.2" cy="422.7" r="2.45"/>
<circle cx="446.5" cy="427" r="2.45"/>
<circle cx="430.5" cy="446" r="2.45"/>
<circle cx="526" cy="409.3" r="2.45"/>
<circle cx="583.7" cy="417" r="2.45"/>
<circle cx="585.2" cy="420" r="2.45"/>
<circle cx="595.5" cy="417" r="2.45"/>
<circle cx="598" cy="425" r="2.45"/>
<circle cx="584.7" cy="428.9" r="2.45"/>
<circle cx="544" cy="426" r="2.45"/>
<circle cx="541.6" cy="429.9" r="2.45"/>
<circle cx="539.7" cy="431.8" r="2.45"/>
<circle cx="548" cy="437.7" r="2.45"/>
<circle cx="551" cy="441.1" r="2.45"/>
<circle cx="543.1" cy="449" r="2.45"/>
<circle cx="539.7" cy="458.3" r="2.45"/>
<circle cx="519.1" cy="463.7" r="2.45"/>
<circle cx="526" cy="463.7" r="2.45"/>
<circle cx="579.8" cy="443.1" r="2.45"/>
<circle cx="585.2" cy="449" r="2.45"/>
<circle cx="587.2" cy="451" r="2.45"/>
<circle cx="590.1" cy="458.3" r="2.45"/>
<circle cx="595" cy="461.2" r="2.45"/>
<circle cx="631.3" cy="415.4" r="2.45"/>
<circle cx="633.9" cy="414" r="2.45"/>
<circle cx="638.4" cy="416.4" r="2.45"/>
<circle cx="655" cy="430.5" r="2.45"/>
<circle cx="635.8" cy="435.6" r="2.45"/>
<circle cx="641" cy="436.8" r="2.45"/>
<circle cx="597.6" cy="424.8" r="2.45"/>
<circle cx="602" cy="445.2" r="2.45"/>
<circle cx="600.6" cy="449.7" r="2.45"/>
<circle cx="589.8" cy="458.5" r="2.45"/>
<circle cx="595.3" cy="461" r="2.45"/>
<circle cx="519" cy="463.5" r="2.45"/>
<circle cx="526" cy="463.5" r="2.45"/>
<circle cx="493" cy="473.7" r="2.45"/>
<circle cx="510.9" cy="482.5" r="2.45"/>
<circle cx="496.6" cy="503.5" r="2.45"/>
<circle cx="528.5" cy="520" r="2.45"/>
<circle cx="502.8" cy="536.4" r="2.45"/>
<circle cx="430.5" cy="540" r="2.45"/>
<circle cx="433.9" cy="540" r="2.45"/>
<circle cx="448.6" cy="539.3" r="2.45"/>
<circle cx="469" cy="541.3" r="2.45"/>
<circle cx="429.4" cy="562.3" r="2.45"/>
<circle cx="432.5" cy="589.3" r="2.45"/>
<circle cx="425" cy="589" r="2.45"/>
<circle cx="489.7" cy="564.8" r="2.45"/>
<circle cx="501.8" cy="563.8" r="2.45"/>
<circle cx="490.7" cy="575.2" r="2.45"/>
<circle cx="487.3" cy="591.6" r="2.45"/>
<circle cx="485.2" cy="598" r="2.45"/>
<circle cx="542.2" cy="561.5" r="2.45"/>
<circle cx="553.4" cy="495.7" r="2.45"/>
<circle cx="539" cy="473.7" r="2.45"/>
<circle cx="542.6" cy="478" r="2.45"/>
<circle cx="576.9" cy="530.5" r="2.45"/>
<circle cx="559.8" cy="584.4" r="2.45"/>
<circle cx="561.2" cy="582.4" r="2.45"/>
<circle cx="445.3" cy="608.5" r="2.45"/>
<circle cx="595.3" cy="461.6" r="2.45"/>
<circle cx="675.6" cy="483.5" r="2.45"/>
<circle cx="742.2" cy="508.6" r="2.45"/>
<circle cx="612.5" cy="507.6" r="2.45"/>
<circle cx="641.9" cy="504" r="2.45"/>
<circle cx="644.8" cy="510.5" r="2.45"/>
<circle cx="577.2" cy="530.5" r="2.45"/>
<circle cx="592.7" cy="557.4" r="2.45"/>
<circle cx="603.1" cy="559.3" r="2.45"/>
<circle cx="622.3" cy="570.3" r="2.45"/>
<circle cx="561" cy="582.4" r="2.45"/>
<circle cx="604" cy="598.7" r="2.45"/>
<circle cx="620.7" cy="491.3" r="2.45"/>
<circle cx="622.7" cy="492.3" r="2.45"/>
</g>
<g fill="#9a4fd9">
<path d="M541 424.6L544.5 430.8L537.5 430.8Z"/>
<path d="M544 430.1L547.5 436.3L540.5 436.3Z"/>
<path d="M549.5 427.1L553.0 433.3L546.0 433.3Z"/>
<path d="M543 420.6L546.5 426.8L539.5 426.8Z"/>
<path d="M538 426.6L541.5 432.8L534.5 432.8Z"/>
<path d="M551 432.6L554.5 438.8L547.5 438.8Z"/>
<path d="M445.9 424.8L449.4 431.0L442.4 431.0Z"/>
<path d="M624.7 431.20000000000005L628.2 437.40000000000003L621.2 437.40000000000003Z"/>
<path d="M596.7 435.6L600.2 441.8L593.2 441.8Z"/>
<path d="M594.7 416.90000000000003L598.2 423.1L591.2 423.1Z"/>
<path d="M650 441.40000000000003L653.5 447.6L646.5 447.6Z"/>
<path d="M546 424.0L549.5 430.2L542.5 430.2Z"/>
<path d="M546 427.90000000000003L549.5 434.1L542.5 434.1Z"/>
<path d="M552.9 423.0L556.4 429.2L549.4 429.2Z"/>
<path d="M558.8 426.5L562.3 432.7L555.3 432.7Z"/>
<path d="M563.7 423.6L567.2 429.8L560.2 429.8Z"/>
<path d="M575 431.40000000000003L578.5 437.6L571.5 437.6Z"/>
<path d="M545.5 439.6L549.0 445.8L542.0 445.8Z"/>
<path d="M541.1 445.6L544.6 451.8L537.6 451.8Z"/>
<path d="M580.3 444.1L583.8 450.3L576.8 450.3Z"/>
<path d="M581.8 449.5L585.3 455.7L578.3 455.7Z"/>
<path d="M596 416.20000000000005L599.5 422.40000000000003L592.5 422.40000000000003Z"/>
<path d="M596.5 435.3L600.0 441.5L593.0 441.5Z"/>
<path d="M463.3 537.9L466.8 544.0999999999999L459.8 544.0999999999999Z"/>
<path d="M471.7 540.4L475.2 546.5999999999999L468.2 546.5999999999999Z"/>
<path d="M487.7 537.9L491.2 544.0999999999999L484.2 544.0999999999999Z"/>
<path d="M530.8 506.6L534.3 512.8L527.3 512.8Z"/>
<path d="M536.1 533.0L539.6 539.1999999999999L532.6 539.1999999999999Z"/>
<path d="M539 480.6L542.5 486.8L535.5 486.8Z"/>
<path d="M548.9 486.0L552.4 492.2L545.4 492.2Z"/>
<path d="M548 491.90000000000003L551.5 498.1L544.5 498.1Z"/>
<path d="M426 572.2L429.5 578.4L422.5 578.4Z"/>
<path d="M563.4 382.0L566.9 388.2L559.9 388.2Z"/>
<path d="M546 425.7L549.8 429.5L546 433.3L542.2 429.5Z"/>
<path d="M541.5 428.2L545.3 432L541.5 435.8L537.7 432Z"/>
<path d="M421.4 430.4L425.2 434.2L421.4 438.0L417.59999999999997 434.2Z"/>
<path d="M428.6 442.59999999999997L432.40000000000003 446.4L428.6 450.2L424.8 446.4Z"/>
<path d="M527.4 433.9L531.1999999999999 437.7L527.4 441.5L523.6 437.7Z"/>
<path d="M573.5 449.59999999999997L577.3 453.4L573.5 457.2L569.7 453.4Z"/>
<path d="M530.4 536.2L534.1999999999999 540L530.4 543.8L526.6 540Z"/>
<path d="M568 518.5L571.8 522.3L568 526.0999999999999L564.2 522.3Z"/>
<path d="M617.8 477.2L621.5999999999999 481L617.8 484.8L614.0 481Z"/>
<path d="M620.7 481.7L624.5 485.5L620.7 489.3L616.9000000000001 485.5Z"/>
<path d="M642.3 479.2L646.0999999999999 483L642.3 486.8L638.5 483Z"/>
<path d="M658.9 481.2L662.6999999999999 485L658.9 488.8L655.1 485Z"/>
<path d="M584.5 486.0L588.3 489.8L584.5 493.6L580.7 489.8Z"/>
<path d="M595.3 486.59999999999997L599.0999999999999 490.4L595.3 494.2L591.5 490.4Z"/>
<path d="M648.5 503.59999999999997L652.3 507.4L648.5 511.2L644.7 507.4Z"/>
<path d="M599.2 547.2L603.0 551L599.2 554.8L595.4000000000001 551Z"/>
<path d="M676.6 562.0L680.4 565.8L676.6 569.5999999999999L672.8000000000001 565.8Z"/>
<path d="M445.3 596.8000000000001L449.1 600.6L445.3 604.4L441.5 600.6Z"/>
<path d="M678.5 373.7L682.5 377.2L682.5 382.2L674.5 382.2L674.5 377.2Z"/>
<path d="M468.1 561.3L472.1 564.8L472.1 569.8L464.1 569.8L464.1 564.8Z"/>
<path d="M691.8 253.2Q692.5 257.5 696.8 258.2Q692.5 258.9 691.8 263.2Q691.0999999999999 258.9 686.8 258.2Q691.0999999999999 257.5 691.8 253.2Z"/>
</g>
<circle cx="562.7" cy="419.6" r="4.8" fill="#fff" stroke="#cfcfcf" stroke-width="0.8"/>
<path d="M560.9000000000001 420.40000000000003Q560.9000000000001 416.40000000000003 562.7 416.20000000000005Q564.5 416.40000000000003 564.5 420.40000000000003Z" fill="#666"/><rect x="560.5" y="420.0" width="4.4" height="2" rx="0.6" fill="#111"/>
<circle cx="554.8" cy="423.5" r="4.8" fill="#fff" stroke="#cfcfcf" stroke-width="0.8"/>
<path d="M553.0 424.3Q553.0 420.3 554.8 420.1Q556.5999999999999 420.3 556.5999999999999 424.3Z" fill="#666"/><rect x="552.5999999999999" y="423.9" width="4.4" height="2" rx="0.6" fill="#111"/>
<circle cx="568.6" cy="424.5" r="4.8" fill="#fff" stroke="#cfcfcf" stroke-width="0.8"/>
<path d="M566.8000000000001 425.3Q566.8000000000001 421.3 568.6 421.1Q570.4 421.3 570.4 425.3Z" fill="#666"/><rect x="566.4" y="424.9" width="4.4" height="2" rx="0.6" fill="#111"/>
<circle cx="522.4" cy="443.7" r="4.8" fill="#fff" stroke="#cfcfcf" stroke-width="0.8"/>
<path d="M520.6 444.5Q520.6 440.5 522.4 440.3Q524.1999999999999 440.5 524.1999999999999 444.5Z" fill="#666"/><rect x="520.1999999999999" y="444.09999999999997" width="4.4" height="2" rx="0.6" fill="#111"/>
<circle cx="515.1" cy="450.7" r="4.8" fill="#fff" stroke="#cfcfcf" stroke-width="0.8"/>
<path d="M513.3000000000001 451.5Q513.3000000000001 447.5 515.1 447.3Q516.9 447.5 516.9 451.5Z" fill="#666"/><rect x="512.9" y="451.09999999999997" width="4.4" height="2" rx="0.6" fill="#111"/>
<circle cx="521.3" cy="452.4" r="4.8" fill="#fff" stroke="#cfcfcf" stroke-width="0.8"/>
<path d="M519.5 453.2Q519.5 449.2 521.3 449.0Q523.0999999999999 449.2 523.0999999999999 453.2Z" fill="#666"/><rect x="519.0999999999999" y="452.79999999999995" width="4.4" height="2" rx="0.6" fill="#111"/>
<circle cx="510.3" cy="455.7" r="4.8" fill="#fff" stroke="#cfcfcf" stroke-width="0.8"/>
<path d="M508.5 456.5Q508.5 452.5 510.3 452.3Q512.1 452.5 512.1 456.5Z" fill="#666"/><rect x="508.1" y="456.09999999999997" width="4.4" height="2" rx="0.6" fill="#111"/>
<circle cx="651.5" cy="441.9" r="4.8" fill="#fff" stroke="#cfcfcf" stroke-width="0.8"/>
<path d="M649.7 442.7Q649.7 438.7 651.5 438.5Q653.3 438.7 653.3 442.7Z" fill="#666"/><rect x="649.3" y="442.29999999999995" width="4.4" height="2" rx="0.6" fill="#111"/>
<circle cx="487.7" cy="522.7" r="4.8" fill="#fff" stroke="#cfcfcf" stroke-width="0.8"/>
<path d="M485.9 523.5Q485.9 519.5 487.7 519.3000000000001Q489.5 519.5 489.5 523.5Z" fill="#666"/><rect x="485.5" y="523.1" width="4.4" height="2" rx="0.6" fill="#111"/>
<circle cx="515.2" cy="544.6" r="4.8" fill="#fff" stroke="#cfcfcf" stroke-width="0.8"/>
<path d="M513.4000000000001 545.4Q513.4000000000001 541.4 515.2 541.2Q517.0 541.4 517.0 545.4Z" fill="#666"/><rect x="513.0" y="545.0" width="4.4" height="2" rx="0.6" fill="#111"/>
<circle cx="426.4" cy="594.8" r="4.8" fill="#fff" stroke="#cfcfcf" stroke-width="0.8"/>
<path d="M424.59999999999997 595.5999999999999Q424.59999999999997 591.5999999999999 426.4 591.4Q428.2 591.5999999999999 428.2 595.5999999999999Z" fill="#666"/><rect x="424.2" y="595.1999999999999" width="4.4" height="2" rx="0.6" fill="#111"/>
<circle cx="579.2" cy="481.3" r="4.8" fill="#fff" stroke="#cfcfcf" stroke-width="0.8"/>
<path d="M577.4000000000001 482.1Q577.4000000000001 478.1 579.2 477.90000000000003Q581.0 478.1 581.0 482.1Z" fill="#666"/><rect x="577.0" y="481.7" width="4.4" height="2" rx="0.6" fill="#111"/>
</svg>
<div class="btn" style="left:10px;top:10.5px;width:21px;height:21px">
 <svg width="21" height="21"><path d="M6 10.5 L10.5 6 L15 10.5 M7 9.5 V15 H9.5 V12 H11.5 V15 H14 V9.5" fill="none" stroke="#cfcfcf" stroke-width="0.9"/></svg></div>
<div class="btn" style="left:10px;top:38px;width:21px;height:42px">
 <svg width="21" height="42"><path d="M6.5 10.5 H14.5 M10.5 6.5 V14.5 M6.5 31.5 H14.5" stroke="#cfcfcf" stroke-width="1"/><rect x="0" y="20.5" width="21" height="1" fill="#3a3a3a"/></svg></div>
<div class="btn" style="left:597px;top:10px;width:159px;height:21px">
 <svg width="159" height="21" style="position:absolute;left:0;top:0"><path d="M6.5 7.5 H14.5 L10.5 12.5 Z" fill="none" stroke="#cfcfcf" stroke-width="0.9"/><rect x="21" y="0" width="1" height="21" fill="#3a3a3a"/><rect x="137" y="0" width="1" height="21" fill="#3a3a3a"/><circle cx="146.5" cy="9.5" r="3.3" fill="none" stroke="#cfcfcf" stroke-width="1"/><path d="M149 12 L152 15" stroke="#cfcfcf" stroke-width="1.1"/></svg>
 <span style="position:absolute;left:25.5px;top:4.7px;font-size:9.3px;color:#d8d8d8;white-space:nowrap">Find Project or Company</span></div>
<div class="btn" style="left:760px;top:10px;width:22px;height:21px">
 <svg width="22" height="21"><path d="M7.5 8 L10 10.5 L7.5 13 M11 8 L13.5 10.5 L11 13" fill="none" stroke="#cfcfcf" stroke-width="0.9"/></svg></div>
<div style="position:absolute;left:10px;top:453px;width:77px;height:11px;background:#353535;border:1px solid #777;border-top:none;"></div>
<span style="position:absolute;left:14px;top:454px;font-size:8px;color:#eee;font-weight:bold">1,000 km</span>
<div style="position:absolute;left:10px;top:465px;width:62px;height:12px;background:#353535;border:1px solid #777;border-bottom:none"></div>
<div style="position:absolute;left:72px;top:465px;width:15px;height:12px;background:#353535;border-right:1px solid #777;border-left:1px solid #999"></div>
<span style="position:absolute;left:14px;top:466px;font-size:8px;color:#eee;font-weight:bold">500 mi</span>
</div>
<div style="position:absolute;left:1022px;top:218px;width:2px;height:486px;background:#e4e4e4"></div>
<div id="attr"><span style="position:absolute;left:3px">Esri, HERE, Garmin, USGS</span><span style="position:absolute;right:3px">Powered by Esri</span></div>
</body></html>
